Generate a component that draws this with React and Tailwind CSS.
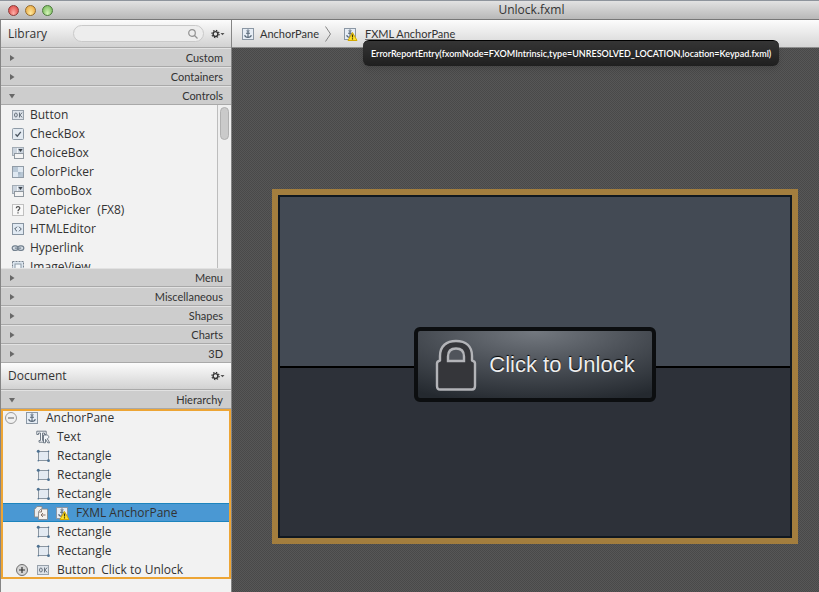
import React from 'react';
import clsx from 'clsx';

const librarySections = ['Menu', 'Miscellaneous', 'Shapes', 'Charts', '3D'];

const controls = [
  { label: 'Button', icon: OkIcon },
  { label: 'CheckBox', icon: CheckIcon },
  { label: 'ChoiceBox', icon: ComboIcon },
  { label: 'ColorPicker', icon: ColorIcon },
  { label: 'ComboBox', icon: ComboIcon },
  { label: 'DatePicker', note: '(FX8)', icon: UnknownIcon },
  { label: 'HTMLEditor', icon: CodeIcon },
  { label: 'Hyperlink', icon: LinkIcon },
  { label: 'ImageView', icon: ImageIcon },
];

/* Icons */

function OkIcon() {
  return (
    <svg className="h-3.5 w-3.5 shrink-0" viewBox="0 0 14 14" fill="none" stroke="#68727d">
      <rect x="1.5" y="2.5" width="11" height="9" fill="#dde3ea" stroke="#97a1ab" />
      <ellipse cx="4.9" cy="7" rx="1.4" ry="2" />
      <path d="M8.5 4.5v5M11.3 4.6 8.8 7l2.5 2.4" />
    </svg>
  );
}

function CheckIcon() {
  return (
    <svg className="h-3.5 w-3.5 shrink-0" viewBox="0 0 14 14" fill="none">
      <rect x="1.5" y="1.5" width="11" height="11" rx="1" fill="#e3eaf1" stroke="#8e9aa6" />
      <path d="M4.5 7.2 6.3 9.2 9.8 4.8" stroke="#4b5560" strokeWidth="1.3" />
    </svg>
  );
}

function ComboIcon() {
  return (
    <svg className="h-3.5 w-3.5 shrink-0" viewBox="0 0 14 14" fill="none">
      <rect x="1.5" y="1.5" width="11" height="8" fill="#cbd4de" stroke="#a2abb4" />
      <path d="M6.5 2v6" stroke="#f1f4f7" />
      <path d="M7.3 3h4.4L9.5 6z" fill="#3c434b" />
      <rect x="3.5" y="7.5" width="9" height="5" fill="#f4f4f4" stroke="#8f979f" />
    </svg>
  );
}

function ColorIcon() {
  return (
    <svg className="h-3.5 w-3.5 shrink-0" viewBox="0 0 14 14">
      <rect x="1.5" y="1.5" width="11" height="11" fill="#dfe8f1" stroke="#909ba6" />
      <path d="M2 2h5v5H2zM7 7h5v5H7z" fill="#b8c7d5" />
      <path d="M7 7h2.5v2.5H7z" fill="#a6b6c6" />
    </svg>
  );
}

function UnknownIcon() {
  return (
    <svg className="h-3.5 w-3.5 shrink-0" viewBox="0 0 14 14" fill="none">
      <rect x="1.5" y="1.5" width="11" height="11" fill="#f8f8f8" stroke="#8b8b8b" strokeDasharray="1 1" />
      <path d="M5.2 5.2c.2-2.2 3.8-2 3.6.1C8.7 6.5 7 6.6 7 8.2" stroke="#505050" strokeWidth="1.2" />
      <path d="M6.4 9.3h1.2v1.2H6.4z" fill="#505050" />
    </svg>
  );
}

function CodeIcon() {
  return (
    <svg className="h-3.5 w-3.5 shrink-0" viewBox="0 0 14 14" fill="none">
      <rect x="1.5" y="1.5" width="11" height="11" fill="#e1eaf3" stroke="#8794a1" />
      <path d="M6 4.7 3.7 7 6 9.3M8 4.7 10.3 7 8 9.3" stroke="#4d5965" />
    </svg>
  );
}

function LinkIcon() {
  return (
    <svg className="h-3.5 w-3.5 shrink-0" viewBox="0 0 14 14" fill="none" stroke="#72808e" strokeWidth="1.2">
      <rect x="1.2" y="4.8" width="6" height="4.6" rx="2.3" fill="#d9e0e8" />
      <rect x="6.8" y="4.8" width="6" height="4.6" rx="2.3" fill="#d9e0e8" />
      <path d="M3.8 7.1h6.4" />
    </svg>
  );
}

function ImageIcon() {
  return (
    <svg className="h-3.5 w-3.5 shrink-0" viewBox="0 0 14 14" fill="none">
      <rect x="1.5" y="1.5" width="11" height="11" fill="#dce6ef" stroke="#78838e" strokeDasharray="2 1" />
      <rect x="4" y="4" width="6" height="6" fill="#f4f7fa" stroke="#8c99a6" />
    </svg>
  );
}

function RectangleIcon() {
  return (
    <svg className="h-3.5 w-3.5 shrink-0" viewBox="0 0 14 14" fill="none">
      <rect x="2.5" y="2.5" width="10" height="9" fill="#e3eaf2" stroke="#8a95a0" />
      <g fill="#4d7191">
        <circle cx="2.3" cy="2.3" r="1.5" />
        <circle cx="12.5" cy="11.7" r="1.4" />
        <circle cx="12.5" cy="2.3" r=".8" />
        <circle cx="2.3" cy="11.7" r=".8" />
      </g>
    </svg>
  );
}

function TextIcon() {
  return (
    <svg className="h-3.5 w-3.5 shrink-0" viewBox="0 0 14 14" fill="#f4f6f9" stroke="#65717d" strokeWidth=".9">
      <path d="M.8 1.2h9.4v3.3H8.5V3H6.5v7.500H8v1.700H3v-1.700h1.500V3h-2v1.500H.8z" />
      <path d="M7.5 5h3.200c2.600 0 2.700 3.300.6 3.800l2.400 4h-2L9.500 9.200v3.600h-2z" />
    </svg>
  );
}

function AnchorIcon({ warning }) {
  return (
    <svg className="h-3.5 w-3.5 shrink-0 overflow-visible" viewBox="0 0 14 14" fill="none">
      <rect x="1.5" y="1.5" width="11" height="11" fill="#e6edf5" stroke="#8b97a4" />
      <circle cx="7" cy="3.8" r="1" stroke="#586878" strokeWidth=".9" />
      <path d="M7 5v5.500M5 6.200h4M3.700 8.200c.5 3 6.100 3 6.600 0" stroke="#586878" strokeWidth="1.1" />
      {warning && (
        <>
          <path d="M9.5 5.5 14 13.5H5z" fill="#ffe32e" stroke="#d3a900" strokeLinejoin="round" />
          <path d="M9.5 7.5v3M9.5 11.3v1.2" stroke="#3d3200" strokeWidth="1.2" />
        </>
      )}
    </svg>
  );
}

function IncludeIcon() {
  return (
    <svg className="h-3.5 w-3.5 shrink-0" viewBox="0 0 14 14" fill="#ececec" stroke="#8a8a8a" strokeWidth=".9">
      <path d="M.5 11V3.5l2.5-3h5V11z" />
      <path d="M4.5 13.5V5.5L7 3h6.5v10.5z" fill="#f7f3ee" />
      <path d="M5 6h2.500V3.500M11.500 9H7M9 7 7 9l2 2" fill="none" stroke="#7a6a60" />
    </svg>
  );
}

function GearIcon() {
  return (
    <svg className="h-3 w-3.5" viewBox="0 0 14 12" fill="none">
      <circle cx="4.5" cy="6" r="2.4" stroke="#333" strokeWidth="1.4" />
      <circle cx="4.5" cy="6" r="3.6" stroke="#333" strokeWidth="1.2" strokeDasharray="1.41 1.41" />
      <path d="M9.5 5h4l-2 2.2z" fill="#555" />
    </svg>
  );
}

function ToggleIcon({ open }) {
  return (
    <svg className="h-3.5 w-3.5 shrink-0" viewBox="0 0 14 14" fill="none">
      <circle cx="7" cy="7" r="5.5" fill={open ? '#f0f0f0' : '#d5d5d5'} stroke={open ? '#9a9a9a' : '#6f6f6f'} />
      <path d={open ? 'M4 7h6' : 'M4 7h6M7 4v6'} stroke={open ? '#777' : '#333'} strokeWidth="1.2" />
    </svg>
  );
}

function LockIcon() {
  return (
    <svg className="h-[52px] w-[42px] shrink-0" viewBox="0 0 42 52" fill="none" stroke="#b3b4b8" strokeWidth="2.4">
      <path
        d="M5 21.5V17C5 7 11.5 2 21 2s16 5 16 15v4.500c2 .5 3 1.500 3 3V47c0 2-1 3.500-3 3.500H5c-2 0-3-1.500-3-3.500V24.500c0-1.500 1-2.500 3-3z"
        fill="#35363a"
        strokeLinejoin="round"
      />
      <path d="M13 22v-4.500c0-5 3-8 8-8s8 3 8 8V22z" fill="#50545b" />
    </svg>
  );
}

/* Panels */

function SectionHeader({ label, open }) {
  return (
    <button
      type="button"
      aria-expanded={!!open}
      className="flex h-[19px] w-full shrink-0 items-center justify-between border-t border-b border-t-[#e2e2e2] border-b-[#a9a9a9] bg-[#cdcdcd] px-2 font-['Lato',sans-serif] text-[11px] leading-4 text-[#333]"
    >
      <svg className="h-1.5 w-1.5" viewBox="0 0 6 6" fill="#686868">
        <path d={open ? 'M0 1h6L3 5.5z' : 'M1 0v6l4.500-3z'} />
      </svg>
      {label}
    </button>
  );
}

function PanelTitle({ title, children }) {
  return (
    <div className="flex shrink-0 items-center justify-between border-b border-[#a9a9a9] bg-linear-to-b from-[#fcfcfc] to-[#d2d2d2] py-[5px] pr-1.5 pl-[7px]">
      <h2 className="text-[12px] leading-4 text-[#333]">{title}</h2>
      <div className="flex items-center gap-[7px]">
        {children}
        <button type="button" aria-label={`${title} options`}>
          <GearIcon />
        </button>
      </div>
    </div>
  );
}

function ControlsList() {
  return (
    <div className="flex h-[163px] shrink-0 overflow-hidden bg-[#f2f2f2]">
      <ul className="flex-1">
        {controls.map(({ label, note, icon: Icon }) => (
          <li key={label} className="flex h-[19px] items-center gap-[5px] pl-2.5 text-[12px] leading-4 text-[#333]">
            <Icon />
            <span>{label}</span>
            {note && <span className="pl-0.5">{note}</span>}
          </li>
        ))}
      </ul>
      <div className="w-3.5 border-l border-[#bdbdbd] bg-[#efefef] px-0.5 pt-0.5">
        <div className="h-[33px] rounded-full border border-[#b0b0b0] bg-[#cacaca]" />
      </div>
    </div>
  );
}

function TreeRow({ label, icon, indent = 'pl-[35px]', selected }) {
  return (
    <li
      className={clsx(
        'flex items-center gap-[7px] text-[12px] leading-4 text-[#333]',
        indent,
        selected && 'border-y border-[#1d84bd] bg-[#4a98d3]'
      )}
    >
      {icon}
      <span>{label}</span>
    </li>
  );
}

function Hierarchy() {
  return (
    <ul className="grid h-[170px] shrink-0 grid-rows-9 bg-[#f2f2f2] outline-2 -outline-offset-2 outline-[#eda535]">
      <TreeRow
        label="AnchorPane"
        indent="pl-[3px]"
        icon={
          <>
            <button type="button" aria-label="Collapse AnchorPane"><ToggleIcon open /></button>
            <AnchorIcon />
          </>
        }
      />
      <TreeRow label="Text" icon={<TextIcon />} />
      <TreeRow label="Rectangle" icon={<RectangleIcon />} />
      <TreeRow label="Rectangle" icon={<RectangleIcon />} />
      <TreeRow label="Rectangle" icon={<RectangleIcon />} />
      <TreeRow
        selected
        label="FXML AnchorPane"
        indent="pl-[33px]"
        icon={
          <>
            <IncludeIcon />
            <AnchorIcon warning />
          </>
        }
      />
      <TreeRow label="Rectangle" icon={<RectangleIcon />} />
      <TreeRow label="Rectangle" icon={<RectangleIcon />} />
      <TreeRow
        label={<>Button<span className="pl-1.5">Click to Unlock</span></>}
        indent="pl-3.5"
        icon={
          <>
            <button type="button" aria-label="Expand Button"><ToggleIcon /></button>
            <OkIcon />
          </>
        }
      />
    </ul>
  );
}

function Sidebar() {
  return (
    <aside className="flex w-[232px] shrink-0 flex-col border-r border-l border-[#858585] bg-[#f2f2f2]">
      <PanelTitle title="Library">
        <div className="flex h-[17px] w-[131px] items-center rounded-full border border-[#c9c9c9] bg-[#ededed] pr-1">
          <input type="text" aria-label="Search library" className="min-w-0 flex-1 bg-transparent pl-2 text-[11px] leading-3 outline-none" />
          <svg className="h-3 w-3" viewBox="0 0 12 12" fill="none" stroke="#929292" strokeWidth="1.2">
            <circle cx="5" cy="5" r="3.3" />
            <path d="m7.5 7.5 3 3" />
          </svg>
        </div>
      </PanelTitle>
      <SectionHeader label="Custom" />
      <SectionHeader label="Containers" />
      <SectionHeader label="Controls" open />
      <ControlsList />
      {librarySections.map((label) => (
        <SectionHeader key={label} label={label} />
      ))}
      <PanelTitle title="Document" />
      <SectionHeader label="Hierarchy" open />
      <Hierarchy />
    </aside>
  );
}

function Breadcrumb() {
  return (
    <nav className="relative flex h-7 shrink-0 items-center border-b border-[#8d8d8d] bg-linear-to-b from-[#fcfcfc] to-[#d6d6d6] pl-[9px] font-['Lato',sans-serif] text-[11px] leading-3 text-[#333]">
      <a href="#root" className="flex items-center gap-[5px]">
        <AnchorIcon />
        AnchorPane
      </a>
      <svg className="mx-1.5 h-4 w-1.5" viewBox="0 0 6 16" fill="none" stroke="#858585">
        <path d="M.5.5 5.5 8 .5 15.5" />
      </svg>
      <a href="#include" className="flex items-center gap-2 pl-1.5">
        <AnchorIcon warning />
        <span className="underline decoration-[#777] decoration-1 underline-offset-1">FXML AnchorPane</span>
      </a>
      <div
        role="tooltip"
        className="absolute top-5 left-[131px] z-10 rounded-md border-t border-black bg-linear-to-b from-[#353535] to-[#1f1f1f] px-2 py-1.5 text-[9px] leading-[13px] font-semibold whitespace-nowrap text-white shadow-md"
      >
        ErrorReportEntry(fxomNode=FXOMIntrinsic,type=UNRESOLVED_LOCATION,location=Keypad.fxml)
      </div>
    </nav>
  );
}

function Canvas() {
  return (
    <main className="flex flex-1 bg-[#505050] bg-[repeating-conic-gradient(#575757_0_25%,#494949_0_50%)] bg-[length:2px_2px] pt-[141px] pr-[21px] pb-12 pl-10">
      <div className="flex flex-1 border-6 border-[#a37e3e]">
        <div className="relative flex flex-1 flex-col border-2 border-[#101820]">
          <div className="flex-1 border-b-2 border-black bg-[#434a54]" />
          <div className="flex-1 bg-[#2d3139]" />
          <div className="absolute inset-0 flex items-center justify-center pb-1">
            <button
              type="button"
              className="flex h-[75px] w-[242px] items-center justify-center gap-3 rounded-md border-4 border-[#0c0e10] bg-[radial-gradient(ellipse_90%_110%_at_50%_0%,#747980_0%,#4a4f56_50%,#24292f_100%)] font-['Liberation_Sans',sans-serif] text-[22px] leading-7 text-[#eeeeee] text-shadow-[0_-1px_1px_#000]"
            >
              <LockIcon />
              Click to Unlock
            </button>
          </div>
        </div>
      </div>
    </main>
  );
}

export default function App() {
  return (
    <div className="flex h-screen flex-col overflow-hidden bg-[#f2f2f2] font-['Open_Sans',sans-serif]">
      <header className="relative flex h-5 shrink-0 items-center justify-center border-t border-b border-t-[#8e949c] border-b-[#777] bg-linear-to-b from-[#e2e2e2] to-[#b8b8b8] pl-[244px]">
        <div className="absolute top-0 left-2 flex h-full items-center gap-1.5">
          <button type="button" aria-label="Close" className="h-[11px] w-[11px] rounded-full border border-[#8c3b38] bg-radial-[at_50%_80%] from-[#ffb0a8] to-[#d83a38]" />
          <button type="button" aria-label="Minimize" className="h-[11px] w-[11px] rounded-full border border-[#956b2b] bg-radial-[at_50%_80%] from-[#ffeaa0] to-[#e6a035]" />
          <button type="button" aria-label="Zoom" className="h-[11px] w-[11px] rounded-full border border-[#4c7a3c] bg-radial-[at_50%_80%] from-[#d5f5b8] to-[#69b04c]" />
        </div>
        <h1 className="text-[12px] leading-4 text-[#333]">Unlock.fxml</h1>
      </header>
      <div className="flex min-h-0 flex-1">
        <Sidebar />
        <div className="flex min-w-0 flex-1 flex-col">
          <Breadcrumb />
          <Canvas />
        </div>
      </div>
    </div>
  );
}
